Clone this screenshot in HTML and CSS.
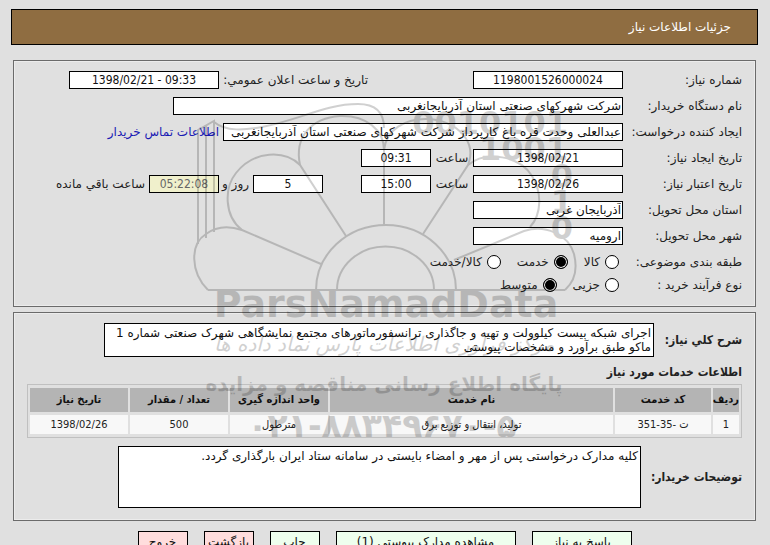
FILE: index.html
```
<!DOCTYPE html>
<html lang="fa" dir="rtl">
<head>
    <meta charset="UTF-8">
    <meta name="viewport" content="width=device-width, initial-scale=1.0">
    <title>جزئیات اطلاعات نیاز</title>
    <link rel="stylesheet" href="styles.css">
</head>
<body>
    <h1 class="page-title">جزئیات اطلاعات نیاز</h1>

    <form>
        <div class="panel">
            <div class="row">
                <label class="name" for="needNo">شماره نیاز:</label>
                <input class="medium" type="text" id="needNo" value="1198001526000024" readonly>
                <label class="announce" for="announceDate">تاریخ و ساعت اعلان عمومي:</label>
                <input class="medium" type="text" id="announceDate" value="1398/02/21 - 09:33" dir="ltr" readonly>
            </div>
            <div class="row">
                <label class="name" for="buyer">نام دستگاه خریدار:</label>
                <input class="wide words" type="text" id="buyer" value="شرکت شهرکهای صنعتی استان آذربایجانغربی" readonly>
            </div>
            <div class="row">
                <label class="name" for="creator">ایجاد کننده درخواست:</label>
                <input class="long words" type="text" id="creator" value="عبدالعلی وحدت قره باغ کارپرداز شرکت شهرکهای صنعتی استان آذربایجانغربی" readonly>
                <a class="contact" href="#">اطلاعات تماس خریدار</a>
            </div>
            <div class="row">
                <label class="name" for="createDate">تاریخ ایجاد نیاز:</label>
                <input class="medium" type="text" id="createDate" value="1398/02/21" readonly>
                <label class="hour" for="createTime">ساعت</label>
                <input class="short" type="text" id="createTime" value="09:31" readonly>
            </div>
            <div class="row">
                <label class="name" for="validDate">تاریخ اعتبار نیاز:</label>
                <input class="medium" type="text" id="validDate" value="1398/02/26" readonly>
                <label class="hour" for="validTime">ساعت</label>
                <input class="short" type="text" id="validTime" value="15:00" readonly>
                <input class="short days" type="text" id="days" value="5" readonly>
                <label class="and" for="days">روز و</label>
                <input class="short timer" type="text" id="remain" value="05:22:08" readonly>
                <label class="remain" for="remain">ساعت باقي مانده</label>
            </div>
            <div class="row">
                <label class="name" for="province">استان محل تحویل:</label>
                <input class="medium words" type="text" id="province" value="آذربایجان غربی" readonly>
            </div>
            <div class="row">
                <label class="name" for="city">شهر محل تحویل:</label>
                <input class="medium words" type="text" id="city" value="ارومیه" readonly>
            </div>
            <div class="row options" role="radiogroup" aria-labelledby="kindLabel">
                <span class="name" id="kindLabel">طبقه بندی موضوعی:</span>
                <label><input type="radio" name="kind"> کالا</label>
                <label><input type="radio" name="kind" checked> خدمت</label>
                <label><input type="radio" name="kind"> کالا/خدمت</label>
            </div>
            <div class="row options" role="radiogroup" aria-labelledby="processLabel">
                <span class="name" id="processLabel">نوع فرآیند خرید :</span>
                <label><input type="radio" name="process"> جزیی</label>
                <label><input type="radio" name="process" checked> متوسط</label>
            </div>
        </div>

        <div class="panel">
            <div class="block">
                <label for="summary">شرح کلي نیاز:</label>
                <textarea class="summary" id="summary" readonly>اجرای شبکه بیست کیلوولت و تهیه و جاگذاری ترانسفورماتورهای مجتمع نمایشگاهی شهرک صنعتی شماره 1 ماکو طبق برآورد و مشخصات پیوستی</textarea>
            </div>

            <h2>اطلاعات خدمات مورد نیاز</h2>
            <table>
                <thead>
                    <tr>
                        <th class="col-no">ردیف</th>
                        <th class="col-code">کد خدمت</th>
                        <th>نام خدمت</th>
                        <th class="col-unit">واحد اندازه گیری</th>
                        <th class="col-unit">تعداد / مقدار</th>
                        <th class="col-unit">تاریخ نیاز</th>
                    </tr>
                </thead>
                <tbody>
                    <tr>
                        <td>1</td>
                        <td dir="ltr">351-35- ت</td>
                        <td>تولید، انتقال و توزیع برق</td>
                        <td>مترطول</td>
                        <td>500</td>
                        <td>1398/02/26</td>
                    </tr>
                </tbody>
            </table>

            <div class="block">
                <label for="notes">توضیحات خریدار:</label>
                <textarea class="notes" id="notes" readonly>کلیه مدارک درخواستی پس از مهر و امضاء بایستی در سامانه ستاد ایران بارگذاری گردد.</textarea>
            </div>
        </div>

        <div class="buttons">
            <button type="button" class="btn-reply">پاسخ به نیاز</button>
            <button type="button" class="btn-docs">مشاهده مدارک پیوستی (1)</button>
            <button type="button">چاپ</button>
            <button type="button" class="red">بازگشت</button>
            <button type="button" class="red">خروج</button>
        </div>
    </form>

    <svg class="watermark" viewBox="185 95 400 355" width="400" height="355" aria-hidden="true">
        <g class="lines">
            <!-- book behind the flower -->
            <path d="M198 244V130L214 121V232M206 238V126M214 122C226 132 245 130 262 127C300 120 325 104 358 104C376 104 384 112 384 128"/>
            <!-- petals -->
            <path d="M208 290C190 272 190 244 206 234C218 225 230 226 242 230L321 264"/>
            <path d="M242 230C224 216 224 188 236 173C254 150 285 150 300 165L346 236"/>
            <path d="M300 165C294 136 312 118 340 116C366 115 384 130 384 150V225"/>
            <path d="M384 150C386 130 405 118 428 119C458 121 477 142 468 165L423 234"/>
            <path d="M468 165C486 150 520 156 532 176C542 192 542 214 530 227"/>
            <path d="M454 260L524 231C545 224 568 234 574 254C578 270 574 282 565 290"/>
            <!-- centre -->
            <path d="M316 290A70 65 0 0 1 456 290M337 290A48 43 0 0 1 434 290M208 290H565"/>
        </g>
        <g class="digits">
            <text x="568" y="134">0010101</text>
            <text x="568" y="160">1001</text>
            <text x="573" y="187">0</text>
            <text x="573" y="213">1</text>
            <text x="573" y="239">0</text>
        </g>
        <text class="brand" x="386" y="317">ParsNamadData</text>
        <text class="slogan" x="384" y="351">مرکز فرآوری اطلاعات پارس نماد داده ها</text>
        <text class="site" x="384" y="391">پایگاه اطلاع رسانی مناقصه و مزایده</text>
        <text class="phone" x="382" y="437">۰۲۱-۸۸۳۴۹۶۷۰-۵</text>
    </svg>
</body>
</html>
```

FILE: styles.css
```
* { box-sizing: border-box; }
body { margin: 0; padding: 9px 12px 9px 11px; position: relative; background: #e0e0e0; color: #222; font-family: "DejaVu Sans", sans-serif; font-size: 12px; line-height: 14px; }
input, textarea, button { font: inherit; color: #111; margin: 0; border: 1px solid #000; border-radius: 0; background: #fff; }

.page-title { margin: 0 0 15px; padding: 10px 26px; background: #8f6d41; border: 1px solid #000; color: #fff; font-size: 12px; font-weight: normal; line-height: 14px; }

.panel { margin: 0 2px 5px; padding: 10px 13px 12px; border: 1px solid #6b6b6b; box-shadow: inset 0 0 0 1px #ececec; }
.row { display: flex; align-items: center; height: 18px; margin-bottom: 8px; white-space: nowrap; }
.row .name { flex: none; width: 119px; }
.row input[type="text"] { flex: none; height: 18px; padding: 0 1px; font-family: "DejaVu Sans Condensed", sans-serif; text-align: center; }
.row input.words { font-family: "DejaVu Sans", sans-serif; text-align: right; }
.row .medium { width: 150px; }
.row .wide { width: 450px; }
.row .long { width: 400px; }
.row .short { width: 70px; }
.row .announce { width: 149px; margin-right: 105px; }
.row .hour { width: 42px; text-align: center; }
.row .days { margin-right: 38px; }
.row .and { width: 34px; padding-right: 4px; }
.row .timer { background: #f0f0cc; color: #666; }
.row .remain { margin-right: 4px; }
.contact { margin-right: 4px; color: #1a1ab4; text-decoration: none; }

.options { margin-bottom: 5px; }
.options label { display: flex; align-items: center; gap: 5px; margin-right: 4px; }
.options label + label { margin-right: 16px; }
.options input { appearance: none; flex: none; width: 14px; height: 14px; border-radius: 50%; }
.options input:checked { background: #000; box-shadow: inset 0 0 0 1px #fff; }
.options:last-child { margin-bottom: 0; }

.block { display: flex; align-items: center; justify-content: space-between; }
.block label, h2, th, td { font-family: "DejaVu Sans Condensed", sans-serif; }
.block label { font-weight: bold; white-space: nowrap; }
textarea { display: block; padding: 2px; resize: none; overflow: hidden; }
.summary { width: 550px; height: 34px; margin-left: 77px; }
.notes { width: 523px; height: 62px; margin-left: 91px; }
h2 { margin: 8px 0 5px; font-size: 12px; line-height: 14px; }

table { width: 100%; margin-bottom: 8px; border: 1px solid #c0c0c0; border-collapse: separate; border-spacing: 2px 3px; table-layout: fixed; font-size: 11px; text-align: center; }
th, td { padding: 0; white-space: nowrap; }
th { height: 24px; background: #b4b4b4; color: #111; }
td { height: 19px; background: #f8f8f8; }
.col-no { width: 26px; }
.col-code { width: 96px; }
.col-unit { width: 98px; }

.buttons { display: flex; justify-content: center; gap: 16px; margin-top: 10px; }
button { width: 50px; height: 21px; padding: 0; background: #efe; white-space: nowrap; cursor: pointer; }
.btn-reply { width: 100px; }
.btn-docs { width: 180px; }
.red { background: #fdd; }

.watermark { position: absolute; top: 95px; left: 50%; margin-left: -200px; opacity: 0.18; pointer-events: none; }
.watermark .lines { fill: none; stroke: #000; stroke-width: 2; }
.watermark text { fill: #000; text-anchor: middle; font-family: "DejaVu Sans", sans-serif; }
.watermark .digits text { direction: ltr; font-size: 32px; font-weight: bold; text-anchor: end; }
.watermark .brand { direction: ltr; font-size: 38px; font-weight: bold; }
.watermark .slogan { font-size: 20px; font-style: italic; }
.watermark .site { font-size: 20px; font-weight: bold; }
.watermark .phone { direction: ltr; font-size: 33px; font-weight: bold; }
```
